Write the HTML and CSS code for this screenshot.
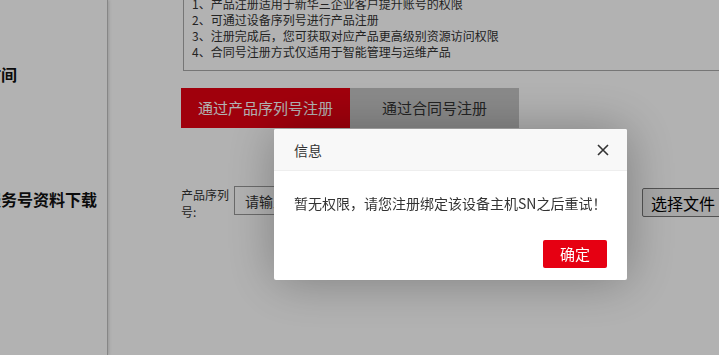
FILE: index.html
```html
<!DOCTYPE html>
<html lang="zh-CN">
  <head>
    <meta charset="UTF-8" />
    <meta name="viewport" content="width=device-width, initial-scale=1.0" />
    <title>产品注册</title>
    <link rel="stylesheet" href="styles.css">
  </head>
  <body>
    <div class="page">
      <aside class="sidebar">
        <ul class="side-menu">
          <li class="side-item side-first">保修时间</li>
          <li class="side-item">增值服务号资料下载</li>
        </ul>
      </aside>
      <main class="content">
        <div class="notice">
          <p>1、产品注册适用于新华三企业客户提升账号的权限</p>
          <p>2、可通过设备序列号进行产品注册</p>
          <p>3、注册完成后，您可获取对应产品更高级别资源访问权限</p>
          <p>4、合同号注册方式仅适用于智能管理与运维产品</p>
        </div>
        <div class="tabs">
          <div class="tab tab-active">通过产品序列号注册</div>
          <div class="tab">通过合同号注册</div>
        </div>
        <form class="reg-form">
          <label class="field-name">产品序列号:</label>
          <input class="form-input" type="text" placeholder="请输入产品序列号" />
          <button class="file-button" type="button">选择文件</button>
        </form>
      </main>
    </div>

    <div class="shade"></div>
    <div class="layer">
      <div class="layer-title">
        <span>信息</span>
        <svg class="layer-close" width="12" height="12" viewBox="0 0 12 12">
          <path d="M1 1L11 11M11 1L1 11" stroke="#333" stroke-width="1.6" fill="none" />
        </svg>
      </div>
      <div class="layer-content">暂无权限，请您注册绑定该设备主机SN之后重试！</div>
      <div class="layer-btns">
        <a class="layer-btn">确定</a>
      </div>
    </div>
  </body>
</html>
```

FILE: styles.css
```css
* {
  box-sizing: border-box;
}
html,
body {
  margin: 0;
  height: 100%;
  overflow: hidden;
}
body {
  font-family: "Noto Sans CJK SC", "Noto Sans", sans-serif;
  background: #fff;
  color: #333;
}
.page {
  display: flex;
  height: 100%;
}

.sidebar {
  width: 108px;
  flex-shrink: 0;
  border-right: 1px solid #c0c0c0;
  box-shadow: 1px 0 3px rgba(0, 0, 0, 0.15);
  overflow: hidden;
}
.side-menu {
  list-style: none;
  margin: 0 0 0 -47px;
  padding: 0;
}
.side-item {
  font-size: 16px;
  font-weight: bold;
  color: #111;
  line-height: 20px;
  white-space: nowrap;
  margin-top: 105px;
}
.side-first {
  margin-top: 64px;
}

.content {
  flex: 1;
  padding-left: 73px;
  margin-top: -15px;
  overflow: hidden;
}

.notice {
  margin-left: 2px;
  margin-right: -20px;
  border: 1px solid #aaa;
  padding: 10px 8px;
  font-size: 12px;
  line-height: 16px;
  color: #333;
}
.notice p {
  margin: 0;
  white-space: nowrap;
}

.tabs {
  display: flex;
  margin-top: 17px;
}
.tab {
  width: 169px;
  height: 40px;
  line-height: 40px;
  text-align: center;
  font-size: 15px;
  background: #c6c6c6;
  color: #333;
}
.tab-active {
  background: #e60012;
  color: #fff;
}

.reg-form {
  display: flex;
  align-items: flex-start;
  margin-top: 58px;
}
.field-name {
  width: 53px;
  flex-shrink: 0;
  font-size: 12px;
  line-height: 17px;
  color: #333;
}
.form-input {
  width: 380px;
  flex-shrink: 0;
  height: 29px;
  border: 1px solid #999;
  padding: 0 10px;
  font-family: inherit;
  font-size: 14px;
  color: #333;
}
.form-input::placeholder {
  color: #333;
}
.file-button {
  margin-left: 28px;
  margin-top: 2px;
  height: 29px;
  padding: 0 8px;
  font-family: inherit;
  font-size: 16px;
  color: #000;
  background: #efefef;
  border: 1px solid #767676;
  border-radius: 2px;
  white-space: nowrap;
  flex-shrink: 0;
}

.shade {
  position: fixed;
  inset: 0;
  background: rgba(0, 0, 0, 0.3);
}
.layer {
  position: fixed;
  left: 274px;
  top: 129px;
  width: 353px;
  background: #fff;
  border-radius: 2px;
  box-shadow: 1px 1px 50px rgba(0, 0, 0, 0.3);
}
.layer-title {
  display: flex;
  align-items: center;
  justify-content: space-between;
  height: 42px;
  padding: 0 20px;
  background: #f8f8f8;
  border-bottom: 1px solid #eee;
  border-radius: 2px 2px 0 0;
  font-size: 14px;
  color: #333;
}
.layer-close {
  margin-right: -2px;
}
.layer-content {
  padding: 20px;
  font-size: 14px;
  line-height: 24px;
  color: #333;
}
.layer-btns {
  display: flex;
  justify-content: flex-end;
  padding: 0 20px 12px;
}
.layer-btn {
  margin-top: 5px;
  width: 64px;
  height: 28px;
  line-height: 28px;
  text-align: center;
  background: #e60012;
  color: #fff;
  font-size: 15px;
  border-radius: 2px;
}
```
